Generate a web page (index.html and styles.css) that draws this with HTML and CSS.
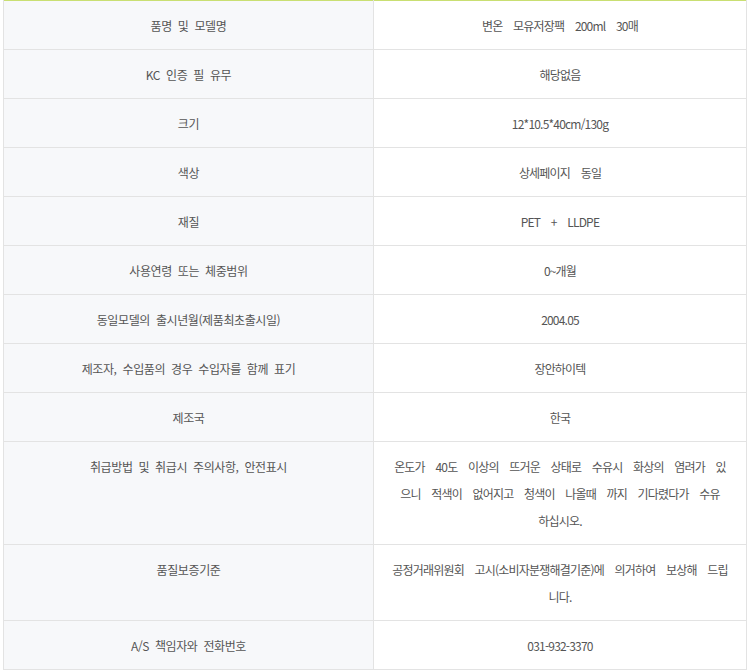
FILE: index.html
```html
<!DOCTYPE html>
<html lang="ko">
<head>
<meta charset="utf-8">
<link rel="stylesheet" href="styles.css">
</head>
<body>
<div class="wrap">
<table class="spec">
<colgroup><col class="c-label"><col class="c-value"></colgroup>
<tbody>
<tr><th>품명 및 모델명</th><td><div class="v">변온 모유저장팩 200ml 30매</div></td></tr>
<tr><th>KC 인증 필 유무</th><td><div class="v">해당없음</div></td></tr>
<tr><th>크기</th><td><div class="v">12*10.5*40cm/130g</div></td></tr>
<tr><th>색상</th><td><div class="v">상세페이지 동일</div></td></tr>
<tr><th>재질</th><td><div class="v">PET + LLDPE</div></td></tr>
<tr><th>사용연령 또는 체중범위</th><td><div class="v">0~개월</div></td></tr>
<tr><th>동일모델의 출시년월(제품최초출시일)</th><td><div class="v">2004.05</div></td></tr>
<tr><th>제조자, 수입품의 경우 수입자를 함께 표기</th><td><div class="v">장안하이텍</div></td></tr>
<tr><th>제조국</th><td><div class="v">한국</div></td></tr>
<tr><th>취급방법 및 취급시 주의사항, 안전표시</th><td><div class="v">온도가 40도 이상의 뜨거운 상태로 수유시 화상의 염려가 있으니 적색이 없어지고 청색이 나올때 까지 기다렸다가 수유 하십시오.</div></td></tr>
<tr><th>품질보증기준</th><td><div class="v">공정거래위원회 고시(소비자분쟁해결기준)에 의거하여 보상해 드립니다.</div></td></tr>
<tr><th>A/S 책임자와 전화번호</th><td><div class="v">031-932-3370</div></td></tr>
</tbody>
</table>
</div>
</body>
</html>
```
FILE: styles.css
```css
html, body {
  margin: 0;
  padding: 0;
  background: #ffffff;
}
.wrap {
  padding: 0 4px 0 3px;
}
.spec {
  width: 743px;
  border-collapse: collapse;
  table-layout: fixed;
  border-top: 1px solid #c9df72;
  font-family: "Noto Sans CJK KR", "Noto Sans", sans-serif;
  font-size: 12px;
  color: #555555;
}
.c-label { width: 370px; }
.c-value { width: 373px; }
.spec th,
.spec td {
  border: 1px solid #e3e3e3;
  line-height: 27px;
  text-align: center;
  vertical-align: top;
  font-weight: normal;
  word-break: normal;
}
.spec tr:first-child th,
.spec tr:first-child td {
  border-top: 0;
}
.spec th {
  background: #f7f8fa;
  padding: 11px 18px 10px;
  letter-spacing: -0.4px;
  word-spacing: 3px;
}
.spec td {
  background: #ffffff;
  padding: 11px 0 10px;
  letter-spacing: -0.8px;
  word-spacing: 8px;
}
.v {
  width: 338px;
  margin: 0 auto;
}
```
